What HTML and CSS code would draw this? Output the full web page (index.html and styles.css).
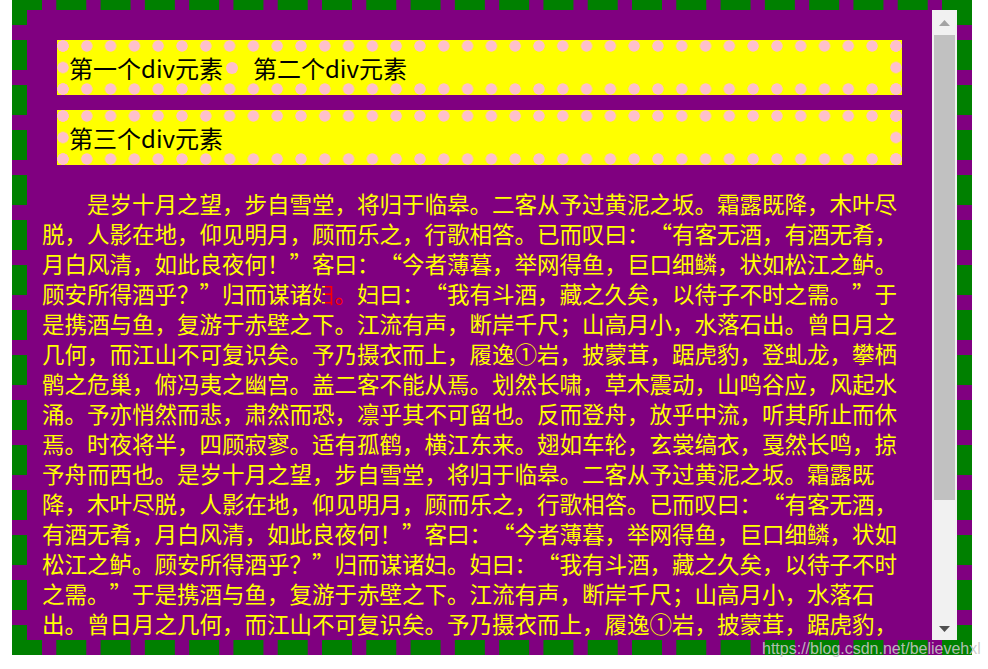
FILE: index.html
```html
<!DOCTYPE html>
<html lang="zh-CN">
<head>
<meta charset="utf-8">
<title>div元素</title>
<link rel="stylesheet" href="styles.css">
</head>
<body>
<div class="frame">
  <div class="content">
    <div class="box"><span class="item">第一个div元素</span><i class="dot"></i><span class="item item-second">第二个div元素</span></div>
    <div class="box"><span class="item">第三个div元素</span></div>
    <p class="essay">是岁十月之望，步自雪堂，将归于临皋。二客从予过黄泥之坂。霜露既降，木叶尽脱，人影在地，仰见明月，顾而乐之，行歌相答。已而叹曰：<span class="qo">“</span>有客无酒，有酒无肴，月白风清，如此良夜何！<span class="qc">”</span>客曰：<span class="qo">“</span>今者薄暮，举网得鱼，巨口细鳞，状如松江之鲈。顾安所得酒乎？<span class="qc">”</span>归而谋诸<span class="split">妇</span><span class="red">。</span>妇曰：<span class="qo">“</span>我有斗酒，藏之久矣，以待子不时之需。<span class="qc">”</span>于是携酒与鱼，复游于赤壁之下。江流有声，断岸千尺；山高月小，水落石出。曾日月之几何，而江山不可复识矣。予乃摄衣而上，履逸①岩，披蒙茸，踞虎豹，登虬龙，攀栖鹘之危巢，俯冯夷之幽宫。盖二客不能从焉。划然长啸，草木震动，山鸣谷应，风起水涌。予亦悄然而悲，肃然而恐，凛乎其不可留也。反而登舟，放乎中流，听其所止而休焉。时夜将半，四顾寂寥。适有孤鹤，横江东来。翅如车轮，玄裳缟衣，戛然长鸣，掠予舟而西也。是岁十月之望，步自雪堂，将归于临皋。二客从予过黄泥之坂。霜露既降，木叶尽脱，人影在地，仰见明月，顾而乐之，行歌相答。已而叹曰：<span class="qo">“</span>有客无酒，有酒无肴，月白风清，如此良夜何！<span class="qc">”</span>客曰：<span class="qo">“</span>今者薄暮，举网得鱼，巨口细鳞，状如松江之鲈。顾安所得酒乎？<span class="qc">”</span>归而谋诸妇。妇曰：<span class="qo">“</span>我有斗酒，藏之久矣，以待子不时之需。<span class="qc">”</span>于是携酒与鱼，复游于赤壁之下。江流有声，断岸千尺；山高月小，水落石出。曾日月之几何，而江山不可复识矣。予乃摄衣而上，履逸①岩，披蒙茸，踞虎豹，登虬龙，攀栖鹘之危巢，俯冯夷之幽宫。盖二客不能从焉。划然长啸，草木震动，山鸣谷应，风起水涌。</p>
  </div>
  <div class="scrollbar">
    <div class="sb-btn"><svg width="11" height="6" viewBox="0 0 11 6"><polygon points="0,6 5.5,0 11,6" fill="#a3a3a3"/></svg></div>
    <div class="sb-track"><div class="sb-thumb"></div></div>
    <div class="sb-btn sb-btn-down"><svg width="11" height="6" viewBox="0 0 11 6"><polygon points="0,0 11,0 5.5,6" fill="#505050"/></svg></div>
  </div>
</div>
<div class="watermark">https://blog.csdn.net/believehxl</div>
</body>
</html>
```

FILE: styles.css
```css
html, body {
  margin: 0;
  padding: 0;
  background: #ffffff;
}

body {
  position: relative;
  width: 988px;
  height: 669px;
  overflow: hidden;
}

.frame {
  display: flex;
  width: 930px;
  height: 630px;
  margin: -5px 0 0 12px;
  border: 15px dashed #008000;
  background: #800080;
}

.content {
  flex: 1;
  min-width: 0;
  overflow: hidden;
  padding: 15px;
  color: #ffff00;
  font-family: "Noto Sans CJK SC", sans-serif;
}

.box {
  margin: 15px;
  height: 31px;
  padding: 12px;
  background-color: #ffff00;
  background-image:
    radial-gradient(circle 6px at 50% 50%, #ffc0cb 5.3px, rgba(255, 192, 203, 0) 6px),
    radial-gradient(circle 6px at 50% 50%, #ffc0cb 5.3px, rgba(255, 192, 203, 0) 6px),
    radial-gradient(circle 6px at 50% 50%, #ffc0cb 5.3px, rgba(255, 192, 203, 0) 6px),
    radial-gradient(circle 6px at 50% 50%, #ffc0cb 5.3px, rgba(255, 192, 203, 0) 6px);
  background-size: 23.8px 12px, 23.8px 12px, 12px 21.5px, 12px 21.5px;
  background-position: -5.9px 0, -5.9px 100%, 0 -4.75px, 100% -4.75px;
  background-repeat: repeat-x, repeat-x, repeat-y, repeat-y;
  color: #000000;
  font-size: 24px;
  line-height: 31px;
  white-space: nowrap;
}

.item {
  display: inline-block;
  vertical-align: top;
}

.dot {
  display: inline-block;
  vertical-align: top;
  width: 12px;
  height: 12px;
  margin: 9.5px 0 0 3px;
  border-radius: 50%;
  background: #ffc0cb;
}

.item-second {
  margin-left: 15px;
}

.essay {
  margin: 22.5px 0 0;
  font-size: 22.5px;
  line-height: 30px;
  text-indent: 2em;
}

.qo,
.qc {
  display: inline-block;
  width: 1em;
  text-indent: 0;
}

.qo {
  text-align: right;
}

.qc {
  text-align: left;
}

.split {
  background: linear-gradient(90deg, #ffff00 58%, #ff0000 58%);
  -webkit-background-clip: text;
  background-clip: text;
  color: transparent;
}

.red {
  color: #ff0000;
}

.scrollbar {
  flex: none;
  display: flex;
  flex-direction: column;
  width: 25px;
  background: #f1f1f1;
}

.sb-btn {
  display: flex;
  align-items: center;
  justify-content: center;
  height: 25px;
}

.sb-btn-down {
  padding-top: 2px;
  box-sizing: border-box;
}

.sb-track {
  flex: 1;
}

.sb-thumb {
  height: 465px;
  margin: 0 2px;
  background: #c1c1c1;
}

.watermark {
  position: absolute;
  left: 762px;
  top: 640px;
  font-family: "Liberation Sans", Arial, sans-serif;
  font-size: 16px;
  line-height: 18px;
  white-space: nowrap;
  color: rgba(200, 200, 200, 0.9);
}
```
